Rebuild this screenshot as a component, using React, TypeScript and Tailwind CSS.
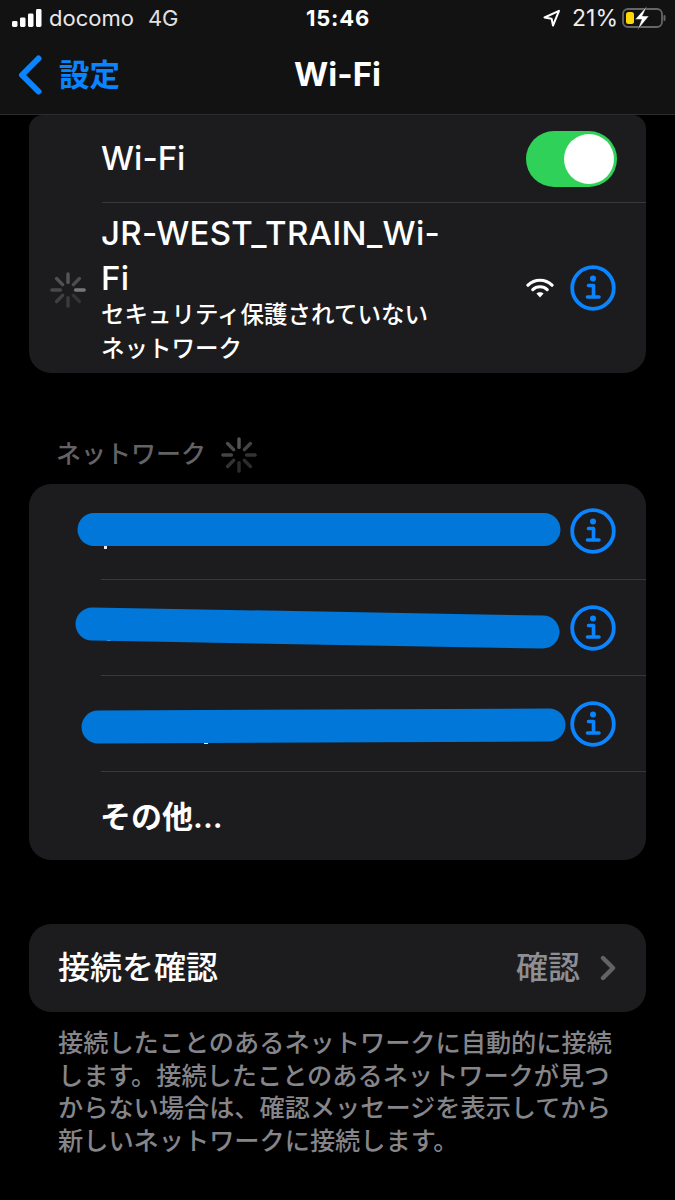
const sans = "font-['Inter','Noto_Sans_CJK_JP',sans-serif]";

function Spinner({ size, colors }: { size: number; colors: string[] }) {
  // eight spokes, starting at the top and going clockwise
  return (
    <svg width={size} height={size} viewBox="0 0 40 40" className="shrink-0">
      {colors.map((c, i) => (
        <line
          key={i}
          x1="20"
          y1="3"
          x2="20"
          y2="12"
          stroke={c}
          strokeWidth="3.6"
          strokeLinecap="round"
          transform={`rotate(${i * 45} 20 20)`}
        />
      ))}
    </svg>
  );
}

function InfoIcon() {
  return (
    <svg width="46" height="46" viewBox="0 0 46 46" fill="none" className="shrink-0">
      <circle cx="23" cy="23" r="20.8" stroke="#0a84ff" strokeWidth="3.8" />
      <circle cx="23" cy="13.5" r="3" fill="#0a84ff" />
      <path
        d="M18.5 20.5H23.5V31.5M17.5 32H29"
        stroke="#0a84ff"
        strokeWidth="3.6"
        strokeLinecap="round"
        strokeLinejoin="round"
      />
    </svg>
  );
}

function WifiIcon() {
  return (
    <svg width="28" height="22" viewBox="0 0 28 22" fill="none">
      <path d="M2 8.2C8.8 1.6 19.2 1.6 26 8.2" stroke="#fff" strokeWidth="3.2" strokeLinecap="round" />
      <path d="M6.8 12.6C10.8 8.8 17.2 8.8 21.2 12.6" stroke="#fff" strokeWidth="3.2" strokeLinecap="round" />
      <path d="M10.4 16.6L14 20.6L17.6 16.6C15.6 14.8 12.4 14.8 10.4 16.6Z" fill="#fff" />
    </svg>
  );
}

function StatusBar() {
  return (
    <div className="h-[36px] pl-[12px] pr-[9px] grid grid-cols-[1fr_auto_1fr] items-center text-white">
      <div className="flex items-center">
        <svg width="30" height="18" viewBox="0 0 30 18" fill="#fff">
          <rect x="0" y="12" width="5.5" height="6" rx="1.4" />
          <rect x="8" y="8.5" width="5.5" height="9.5" rx="1.4" />
          <rect x="16" y="4.5" width="5.5" height="13.5" rx="1.4" />
          <rect x="24" y="0" width="5.5" height="18" rx="1.4" />
        </svg>
        <span className="ml-[7px] text-[22px] leading-none text-[#e8e8e8]">docomo</span>
        <span className="ml-[14px] text-[22px] leading-none text-[#e0e0e0]">4G</span>
      </div>
      <span className="-ml-[2px] text-[22px] leading-none font-bold tracking-[0.8px]">15:46</span>
      <div className="flex items-center justify-end">
        <svg width="18" height="18" viewBox="0 0 18 18" fill="none">
          <path d="M1.5 8.5L16 1.8L10 16.5L8.6 9.8Z" stroke="#fff" strokeWidth="2" strokeLinejoin="round" />
        </svg>
        <span className="ml-[11px] text-[23px] leading-none text-[#eeeeee]">21%</span>
        <svg width="44" height="24" viewBox="0 0 44 24" fill="none" className="ml-[4px]">
          <rect x="1" y="3" width="39" height="18" rx="5" stroke="#666" strokeWidth="1.8" />
          <rect x="41.5" y="9" width="2" height="6" rx="1" fill="#666" />
          <rect x="4" y="6" width="8" height="12" rx="2.5" fill="#ffd60a" />
          <path d="M25 0L13 13.5H19.5L15.5 24L27 10H20.5Z" fill="#fff" stroke="#121212" strokeWidth="0.5" />
        </svg>
      </div>
    </div>
  );
}

function NavBar() {
  return (
    <div className="h-[78px] grid grid-cols-[1fr_auto_1fr] items-center pb-[1px]">
      <div className="flex items-center pl-[18px]">
        <svg width="24" height="40" viewBox="0 0 24 40" fill="none">
          <path d="M20.5 3.5L4 20L20.5 36.5" stroke="#0a84ff" strokeWidth="6" strokeLinecap="round" strokeLinejoin="round" />
        </svg>
        <span className="ml-[17px] mt-[1px] text-[30.5px] leading-none font-semibold text-[#0a84ff]">設定</span>
      </div>
      <span className="text-[33px] leading-none font-bold text-white">Wi-Fi</span>
      <div />
    </div>
  );
}

function Scribble({ x1, y1, x2, y2, specks }: { x1: number; y1: number; x2: number; y2: number; specks: number[][] }) {
  return (
    <svg width="617" height="96" viewBox="0 0 617 96" className="absolute left-0 top-0">
      {specks.map(([x, y, w, h], i) => (
        <rect key={i} x={x} y={y} width={w} height={h} fill="#e8e8e8" />
      ))}
      <line x1={x1} y1={y1} x2={x2} y2={y2} stroke="#0077d9" strokeWidth="33" strokeLinecap="round" />
    </svg>
  );
}

function HiddenRow({
  iconTop,
  x1,
  y1,
  x2,
  y2,
  specks,
}: {
  iconTop: string;
  x1: number;
  y1: number;
  x2: number;
  y2: number;
  specks: number[][];
}) {
  return (
    <div className="relative h-[96px] ml-[72px] border-b border-[#38383a]">
      <div className="relative -ml-[72px] h-full">
        <div className={`flex justify-end pr-[30px] ${iconTop}`}>
          <InfoIcon />
        </div>
        <Scribble x1={x1} y1={y1} x2={x2} y2={y2} specks={specks} />
      </div>
    </div>
  );
}

export default function App() {
  return (
    <div className={`w-[675px] h-[1200px] bg-black overflow-hidden ${sans}`}>
      <header className="h-[115px] bg-[#121212] border-b border-[#2c2c2e]">
        <StatusBar />
        <NavBar />
      </header>

      <section className="mx-[29px] rounded-b-[22px] rounded-t-[14px] bg-[#1c1c1e] text-white">
        <div className="h-[88px] ml-[73px] pr-[29px] flex items-center justify-between border-b border-[#38383a]">
          <span className="-ml-[1px] text-[33px] leading-none font-medium">Wi-Fi</span>
          <div className="w-[91px] h-[56px] rounded-full bg-[#30d158] flex items-center justify-end pr-[3px]">
            <div className="w-[50px] h-[50px] rounded-full bg-white" />
          </div>
        </div>
        <div className="h-[170px] flex items-center pl-[20px] pr-[30px]">
          <div className="w-[40px] mt-[3px]">
            <Spinner
              size={38}
              colors={["#555", "#4c4c4c", "#777", "#333", "#3a3a3a", "#404040", "#484848", "#505050"]}
            />
          </div>
          <div className="ml-[12px] w-[345px]">
            <div className="text-[33px] leading-[45px] font-medium tracking-[0.3px]">JR-WEST_TRAIN_Wi-<br />Fi</div>
            <div className="text-[23.5px] leading-[34px] -mt-[3px] font-medium">セキュリティ保護されていない<br />ネットワーク</div>
          </div>
          <div className="ml-auto flex items-center gap-[16px]">
            <WifiIcon />
            <InfoIcon />
          </div>
        </div>
      </section>

      <div className="mt-[57px] mb-[5px] h-[49px] ml-[57px] flex items-center gap-[14px]">
        <span className="-ml-[1px] text-[25px] leading-none font-medium text-[#636366]">ネットワーク</span>
        <Spinner
          size={38}
          colors={["#555", "#444", "#333", "#2c2c2c", "#2c2c2c", "#333", "#444", "#4c4c4c"]}
        />
      </div>

      <section className="mx-[29px] rounded-[22px] bg-[#1c1c1e] text-white">
        <HiddenRow iconTop="pt-[24px]" x1={65} y1={45.5} x2={515} y2={45.5} specks={[[75, 61, 3, 4]]} />
        <HiddenRow iconTop="pt-[25px]" x1={63} y1={44} x2={514} y2={52} specks={[[78, 59, 4, 2], [92, 59, 4, 2]]} />
        <HiddenRow iconTop="pt-[25px]" x1={69} y1={51} x2={520} y2={49} specks={[[175, 66, 4, 2]]} />
        <div className="h-[88px] pl-[71px] flex items-center">
          <span className="text-[31px] leading-none font-semibold">その他...</span>
        </div>
      </section>

      <section className="mt-[64px] mx-[29px] h-[88px] rounded-[22px] bg-[#1c1c1e] flex items-center pl-[29px] pr-[30px]">
        <span className="text-[32px] leading-none font-medium text-white">接続を確認</span>
        <span className="ml-auto text-[32px] leading-none font-medium text-[#8e8e93]">確認</span>
        <svg width="16" height="26" viewBox="0 0 16 26" fill="none" className="ml-[20px]">
          <path d="M3 3L13 13L3 23" stroke="#636366" strokeWidth="4.4" strokeLinecap="round" strokeLinejoin="round" />
        </svg>
      </section>

      <p className="mt-[15px] mx-[58px] text-[25.2px] leading-[32.7px] font-medium text-[#85858a] whitespace-nowrap">
        接続したことのあるネットワークに自動的に接続<br />
        します。接続したことのあるネットワークが見つ<br />
        からない場合は、確認メッセージを表示してから<br />
        新しいネットワークに接続します。
      </p>
    </div>
  );
}
